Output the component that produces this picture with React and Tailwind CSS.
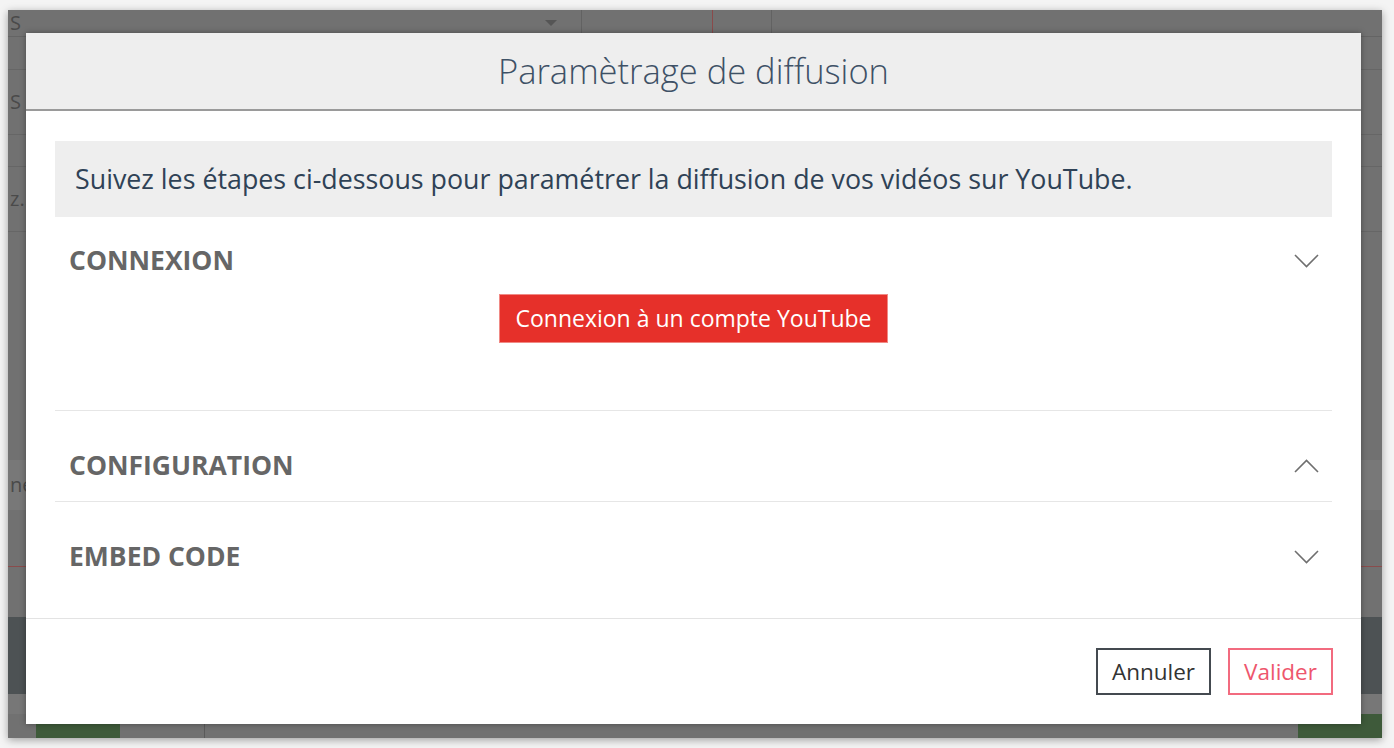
import { useState } from 'react';

const Chevron = ({ up }) => (
    <svg width="25" height="14" viewBox="0 0 25 14" fill="none" className="text-[#6f6f6f]">
        <path
            d={up ? 'M1 13 L12.5 1.5 L24 13' : 'M1 1 L12.5 12.5 L24 1'}
            stroke="currentColor"
            strokeWidth="1.6"
        />
    </svg>
);

const Section = ({ title, open, last, children, onToggle }) => (
    <div className={last ? 'pt-[20px]' : 'pt-[20px] border-b border-[#e6e6e6]'}>
        <button
            onClick={onToggle}
            className="w-full flex items-center justify-between pl-[14px] pr-[13px] h-[70px] cursor-pointer"
        >
            <span className="text-[26.5px] font-bold text-[#666666]">{title}</span>
            <Chevron up={open} />
        </button>
        {children}
    </div>
);

const App = () => {
    const [open, setOpen] = useState({ connexion: false, configuration: true, embed: false });
    const toggle = (k) => setOpen({ ...open, [k]: !open[k] });

    return (
        <div className="w-[1394px] h-[748px] bg-[#f4f4f4] pt-[10px] pl-[8px] overflow-hidden" style={{ fontFamily: '"Open Sans", sans-serif' }}>
            <div className="relative w-[1374px] h-[728px] bg-[#717171] shadow-[0_2px_8px_rgba(0,0,0,0.35)] overflow-hidden">
                {/* page behind the overlay */}
                <div className="flex flex-col text-[#4a4a4a] text-[20px] leading-[24px]">
                    <div className="h-[27px] flex items-center border-b border-[#646464]">
                        <span className="pl-[2px]">S</span>
                        <span className="ml-[524px] w-0 h-0 border-l-[6px] border-r-[6px] border-t-[6px] border-l-transparent border-r-transparent border-t-[#555]" />
                        <span className="ml-[24px] h-[27px] border-l border-[#626262]" />
                        <span className="ml-[130px] h-[27px] border-l border-[#8a4a4a]" />
                        <span className="ml-[58px] h-[27px] border-l border-[#626262]" />
                    </div>
                    <div className="h-[33px] border-b border-[#666]" />
                    <div className="h-[65px] border-b border-[#666] flex items-center pl-[2px]">S</div>
                    <div className="h-[32px] border-b border-[#666]" />
                    <div className="h-[65px] border-b border-[#666] flex items-center pl-[2px]">z..</div>
                    <div className="h-[228px]" />
                    <div className="h-[50px] bg-[#787878] flex items-center pl-[2px]">ne</div>
                    <div className="h-[57px] border-b border-[#8a4c4c]" />
                    <div className="h-[50px]" />
                    <div className="h-[77px] bg-[#4d5254]" />
                    <div className="h-[20px] bg-[#777]" />
                    <div className="flex items-start">
                        <div className="ml-[28px] w-[84px] h-[30px] bg-[#3e5a3a]" />
                        <div className="ml-[84px] h-[30px] border-l border-[#5a5a5a]" />
                        <div className="ml-auto mr-0 w-[84px] h-[30px] bg-[#3e5a3a]" />
                    </div>
                </div>

                {/* modal */}
                <div className="absolute left-[18px] top-[23px] w-[1335px] h-[691px] bg-white flex flex-col shadow-[0_0_6px_rgba(0,0,0,0.35)]">
                    <div className="h-[78px] bg-[#eeeeee] border-b-2 border-[#9a9a9a] flex items-center justify-center">
                        <h1 className="text-[34.5px] font-light text-[#3e5166] -mt-[1px]">Paramètrage de diffusion</h1>
                    </div>

                    <div className="px-[29px] pt-[30px]">
                        <div className="h-[76px] bg-[#eeeeee] flex items-center pl-[20px]">
                            <p className="text-[26.8px] text-[#2f4256]">
                                Suivez les étapes ci-dessous pour paramétrer la diffusion de vos vidéos sur YouTube.
                            </p>
                        </div>

                        <div className="pt-[9px] border-b border-[#e6e6e6]">
                            <button
                                onClick={() => toggle('connexion')}
                                className="w-full flex items-center justify-between pl-[14px] pr-[13px] h-[70px] cursor-pointer"
                            >
                                <span className="text-[26.5px] font-bold text-[#666666]">CONNEXION</span>
                                <Chevron up={open.connexion} />
                            </button>
                            <div className="flex justify-center -mt-[2px] pb-[67px]">
                                <button className="h-[49px] px-[15px] bg-[#e6302a] border border-[#f08a85] text-white text-[23px]">
                                    Connexion à un compte YouTube
                                </button>
                            </div>
                        </div>

                        <Section title="CONFIGURATION" open={open.configuration} onToggle={() => toggle('configuration')} />
                        <Section title="EMBED CODE" open={open.embed} last onToggle={() => toggle('embed')} />
                    </div>

                    <div className="mt-auto border-t border-[#e3e3e3] h-[106px] flex items-center justify-end gap-[17px] pr-[28px]">
                        <button className="h-[47px] w-[115px] border-2 border-[#444a50] text-[22.5px] text-[#333]">Annuler</button>
                        <button className="h-[47px] w-[105px] border-2 border-[#f26b7f] text-[22.5px] text-[#ee566d]">Valider</button>
                    </div>
                </div>
            </div>
        </div>
    );
};

export default App;
